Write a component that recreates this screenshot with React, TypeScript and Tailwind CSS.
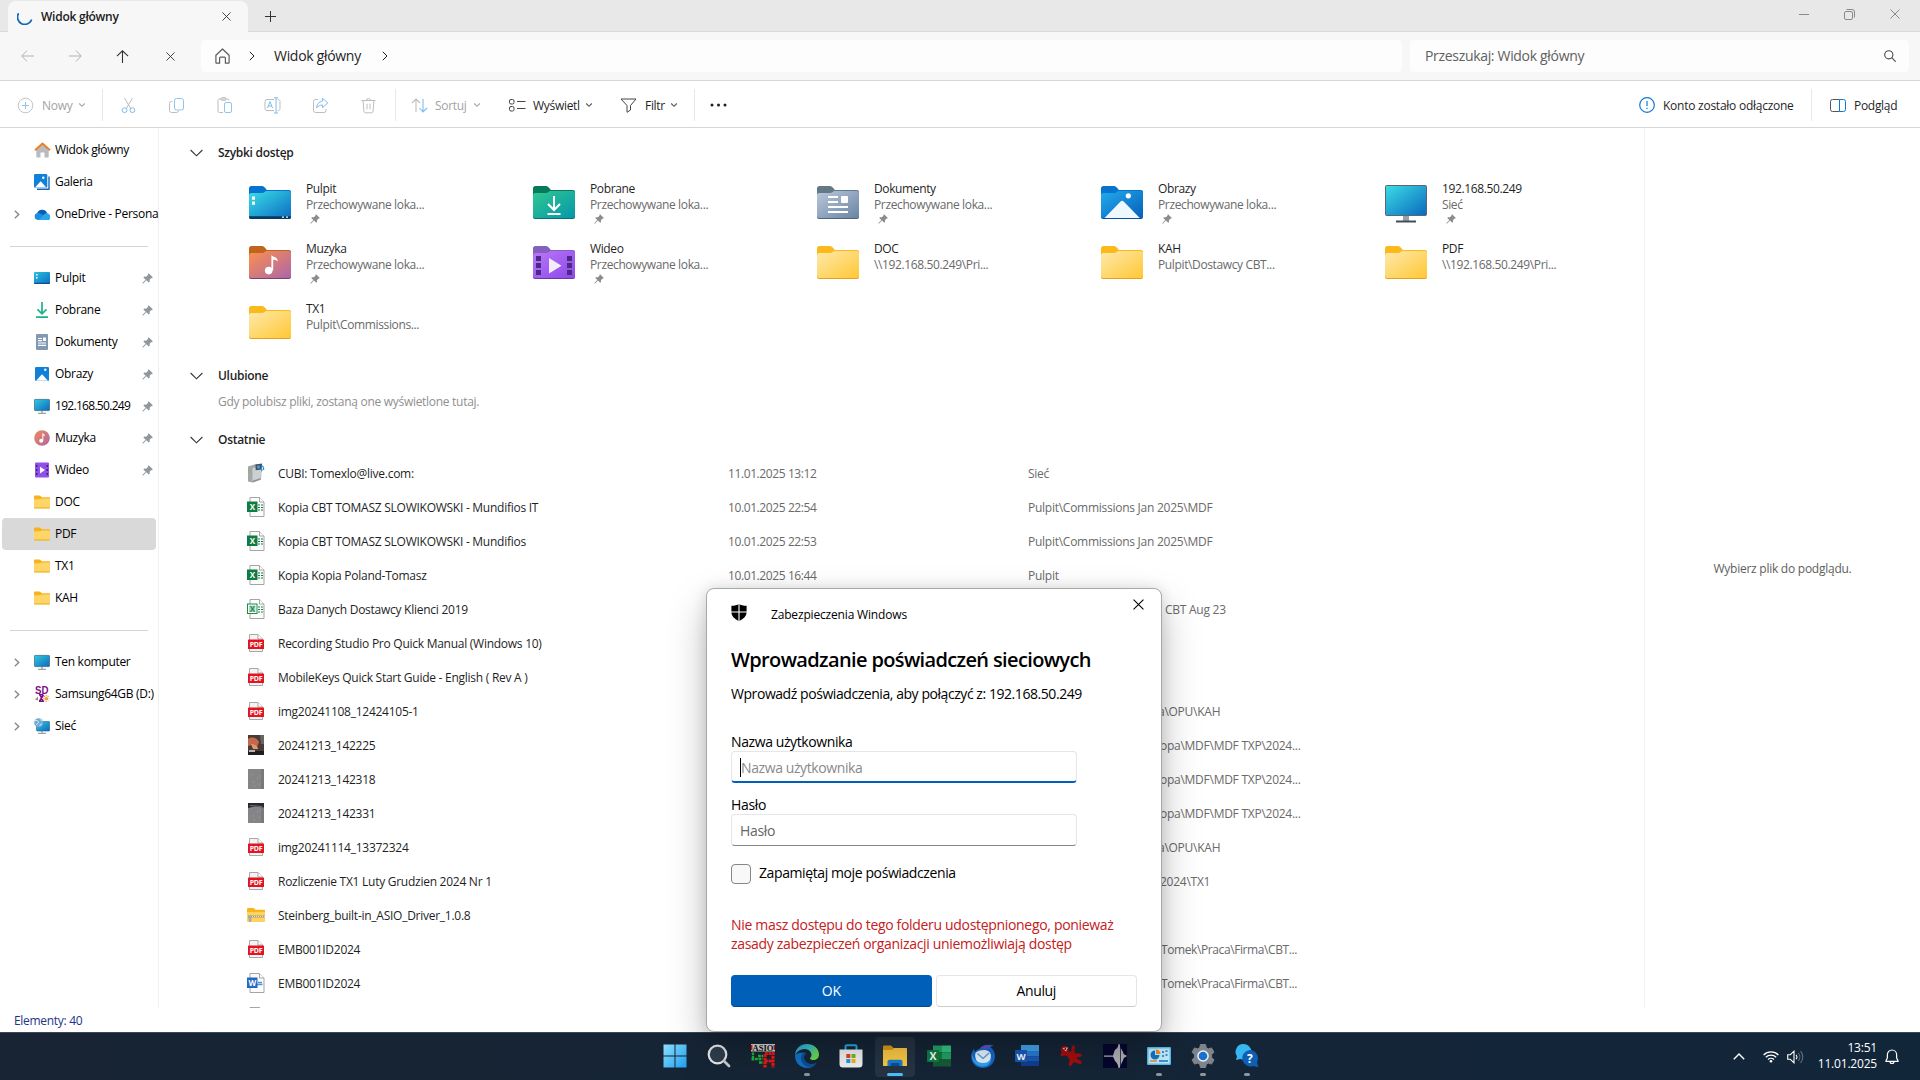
import type { ReactNode } from 'react'

type IconProps = { className?: string }

interface Tile {
  name: string
  sub: string
  pinned?: boolean
  icon: ReactNode
}

interface RecentFile {
  name: string
  date?: string
  location?: string
  indent?: string
  icon: ReactNode
}

/* ---------- line icons ---------- */

function Chevron({ className = '' }: IconProps) {
  return (
    <svg className={`h-[6px] w-[8px] shrink-0 ${className}`} viewBox="0 0 8 6" fill="none" stroke="currentColor" strokeWidth="1.1">
      <path d="M1.2 1.5 4 4.3 6.8 1.5" />
    </svg>
  )
}

function ChevronRight({ className = '' }: IconProps) {
  return (
    <svg className={`h-[10px] w-[6px] shrink-0 ${className}`} viewBox="0 0 6 10" fill="none" stroke="currentColor">
      <path d="M.8.8 5 5 .8 9.2" />
    </svg>
  )
}

function SectionChevron() {
  return (
    <svg className="h-[8px] w-[13px] shrink-0" viewBox="0 0 13 8" fill="none" stroke="#333" strokeWidth="1.1">
      <path d="M.6 1 6.5 6.8 12.4 1" />
    </svg>
  )
}

function Cross({ className = '' }: IconProps) {
  return (
    <svg className={`shrink-0 ${className}`} viewBox="0 0 10 10" fill="none" stroke="currentColor">
      <path d="m.5.5 9 9M9.5.5l-9 9" />
    </svg>
  )
}

function Pin({ className = '' }: IconProps) {
  return (
    <svg className={`shrink-0 ${className}`} viewBox="0 0 11 11" fill="currentColor">
      <path d="M6.7.2 10.8 4.3l-.7.7-.6-.1-1.9 1.9.1 2-.9.8-2.4-2.4L.9 10.7.3 10.1 3.7 6.7 1.4 4.4l.8-.8 2 .1 1.9-1.9-.1-.9z" />
    </svg>
  )
}

/* ---------- coloured icons ---------- */

const FolderBack = ({ color }: { color: string }) => (
  <path d="M0 2.5A2.5 2.5 0 0 1 2.5 0H13c1.500 0 2.500 1 3.500 2.300L17.800 4H40a2 2 0 0 1 2 2v5H0z" fill={color} />
)

function FolderTile({ id, back, from, to, edge, children }: { id: string; back: string; from: string; to: string; edge: string; children?: ReactNode }) {
  return (
    <svg className="h-[33px] w-[42px] shrink-0" viewBox="0 0 42 33">
      <defs>
        <linearGradient id={id} x1="0" y1="0" x2="1" y2="1">
          <stop offset=".1" stopColor={from} />
          <stop offset=".95" stopColor={to} />
        </linearGradient>
      </defs>
      <FolderBack color={back} />
      <path d="M0 9c0-1.200.8-2 2-2h11c1.500 0 2.300-.6 3.200-1.400.5-.5 1-.6 1.800-.6h22a2 2 0 0 1 2 2v24a2 2 0 0 1-2 2H2a2 2 0 0 1-2-2z" fill={edge} />
      <path d="M0 9c0-1.200.8-2 2-2h11c1.500 0 2.300-.6 3.200-1.400.5-.5 1-.6 1.800-.6h22a2 2 0 0 1 2 2v23a2 2 0 0 1-2 2H2a2 2 0 0 1-2-2z" fill={`url(#${id})`} />
      {children}
    </svg>
  )
}

const YellowTile = ({ id }: { id: string }) => (
  <FolderTile id={id} back="#fbb91c" from="#fee6a0" to="#ffc93a" edge="#e3a120" />
)

const DesktopTile = (
  <FolderTile id="t-desk" back="#0673cf" from="#35d3e3" to="#0f72c5" edge="#0a4a80">
    <path d="M3 10.500h3v3.200H3zM3 15.500h3v3.200H3z" fill="#fff" />
    <path d="M0 30.300h42v.7a2 2 0 0 1-2 2H2a2 2 0 0 1-2-2z" fill="#093a64" />
    <path d="M33 30.500h2v1.300h-2zM37 30.500h2v1.300h-2z" fill="#dff" />
  </FolderTile>
)

const DownloadTile = (
  <FolderTile id="t-down" back="#067a5b" from="#2cc394" to="#0899a8" edge="#0b6f74">
    <path d="M21 10v13.500M15 18l6 6 6-6M14.500 28h13" stroke="#fff" strokeWidth="2" fill="none" />
  </FolderTile>
)

const DocsTile = (
  <FolderTile id="t-docs" back="#647987" from="#b3c1d6" to="#6c88a6" edge="#4e657d">
    <path d="M11 11h10M11 16h10M11 21h20M11 26h20" stroke="#fff" strokeWidth="2" />
    <rect x="24" y="10" width="7" height="7" rx="1" fill="#fff" />
  </FolderTile>
)

const PicturesTile = (
  <FolderTile id="t-pics" back="#0673cf" from="#20a3e8" to="#0763bb" edge="#07509c">
    <path d="M3.500 32 19.300 15.700a2.500 2.500 0 0 1 3.600 0L38.800 32z" fill="#eef8ff" />
    <circle cx="27.300" cy="9.800" r="2.600" fill="#fff" />
  </FolderTile>
)

const MusicTile = (
  <FolderTile id="t-music" back="#c0651b" from="#f58c56" to="#b068a4" edge="#7b3f72">
    <path d="M22.400 9c1 2 6.500 1.600 6.300 6.500-1.800-1.700-3.300-1.800-4.500-1.800v10.500h-1.800z" fill="#fff" />
    <circle cx="19.700" cy="24.600" r="3.800" fill="#fff" />
  </FolderTile>
)

const VideoTile = (
  <FolderTile id="t-video" back="#8461bf" from="#b672f7" to="#8e4be8" edge="#6638a8">
    <path d="M3 10h5v5H3zM3 17h5v5H3zM3 24h5v5H3zM34 10h5v5h-5zM34 17h5v5h-5zM34 24h5v5h-5z" fill="#4a2a86" />
    <path d="M16 12v15.500l12.500-7.700z" fill="#f2ecfb" />
  </FolderTile>
)

const MonitorTile = (
  <svg className="-mt-px h-[38px] w-[42px] shrink-0" viewBox="0 0 42 38">
    <defs>
      <linearGradient id="t-mon" x1="0" y1="0" x2="1" y2="1">
        <stop offset="0" stopColor="#3bdde6" />
        <stop offset="1" stopColor="#0a68be" />
      </linearGradient>
    </defs>
    <path d="M18 30h6v6h-6z" fill="#9aa0a6" />
    <path d="M11 35.500h20v2H11z" fill="#454d55" />
    <rect x=".5" y=".5" width="41" height="30" rx="1" fill="url(#t-mon)" stroke="#5b6670" />
  </svg>
)

function SmallFolder() {
  return (
    <svg className="h-[14px] w-[16px]" viewBox="0 0 16 14">
      <path d="M0 1.500C0 .7.700.5 1.300.5h4.200c.6 0 1 .3 1.400.8l.8.9h7.200c.7 0 1.100.4 1.100 1V6H0z" fill="#f4b41a" />
      <path d="M0 5.200c0-.6.300-.9.900-.9h4.700c.7 0 1.100-.2 1.500-.6l.3-.3h7.500c.7 0 1.100.3 1.100.9v8c0 .6-.4 1-1 1H1c-.6 0-1-.4-1-1z" fill="#ffd567" />
      <path d="M0 12.500h16c0 .6-.4 1-1 1H1c-.6 0-1-.4-1-1z" fill="#eba91e" />
    </svg>
  )
}

function SmallHome() {
  return (
    <svg className="h-[16px] w-[17px] shrink-0" viewBox="0 0 17 16">
      <path d="M2.300 7 8.500 2l6.200 5v7.600c0 .6-.4 1-1 1h-3.200v-5h-4v5H3.300c-.6 0-1-.4-1-1z" fill="#b9bcbf" />
      <path d="M1 8.200 8.500 1.500 16 8.200" fill="none" stroke="#ef7f22" strokeWidth="2" strokeLinejoin="round" />
    </svg>
  )
}

function SmallPicture({ stacked = false }: { stacked?: boolean }) {
  return (
    <svg className="size-[16px]" viewBox="0 0 16 16">
      {stacked && <path d="M15 2.500v12.700H3" stroke="#1769b8" strokeWidth="1.400" fill="none" />}
      <rect x={stacked ? 0 : 1} y={stacked ? 0 : 1} width={stacked ? 13.3 : 14} height={stacked ? 13.8 : 14} rx="1.200" fill="#1180d8" />
      <path d={stacked ? 'M1 13.500 6.700 7.200 12.300 13.500z' : 'M2 14.800 8 8.300l6 6.500z'} fill="#fff" />
      <circle cx={stacked ? 9.3 : 11.3} cy="3.800" r="1.200" fill="#fff" />
    </svg>
  )
}

function SmallCloud() {
  return (
    <svg className="h-[11px] w-[17px] shrink-0" viewBox="0 0 17 11">
      <path d="M3 5.500A5.200 5.200 0 0 1 13 4l-2 4z" fill="#0a5fb5" />
      <path d="M3.800 11A3.600 3.600 0 0 1 3.500 3.900c1-.3 2 0 2.800.5L16 9.500c-.5 1-1.200 1.500-2.300 1.500z" fill="#1b8ce0" />
      <path d="M9 7c1-2.500 3.500-3.300 5.500-2.200A3.300 3.300 0 0 1 13.500 11H4z" fill="#28a8ea" />
    </svg>
  )
}

function SmallDesktop() {
  return (
    <svg className="h-[12px] w-[16px]" viewBox="0 0 16 12">
      <rect width="16" height="12" rx="1" fill="url(#s-desk)" />
      <path d="M0 10.800h16v.3c0 .5-.4.9-1 .9H1c-.6 0-1-.4-1-.9z" fill="#0b4f8f" />
      <path d="M2 2h1.600v1.600H2zM2 5h1.600v1.600H2z" fill="#fff" />
      <defs>
        <linearGradient id="s-desk" x1="0" y1="0" x2="1" y2="1">
          <stop stopColor="#27c0de" />
          <stop offset="1" stopColor="#0f6fc4" />
        </linearGradient>
      </defs>
    </svg>
  )
}

function SmallDownload() {
  return (
    <svg className="size-[16px]" viewBox="0 0 16 16" fill="none" stroke="#1fb08a" strokeWidth="1.700">
      <path d="M8 0v11.500M3.500 7.300 8 11.800l4.500-4.500M2 15.100h12" />
    </svg>
  )
}

function SmallDocument() {
  return (
    <svg className="h-[16px] w-[12px]" viewBox="0 0 12 16">
      <rect width="12" height="16" rx="1" fill="#8399b3" />
      <path d="M2 4.500h4M2 6.700h4M2 9h8M2 11.300h8" stroke="#fff" strokeWidth="1.200" />
      <path d="M7 3.500h3v3.500H7z" fill="#fff" />
    </svg>
  )
}

function SmallMonitor({ globe = false }: { globe?: boolean }) {
  return (
    <svg className="size-[16px]" viewBox="0 0 16 16">
      <defs>
        <linearGradient id="s-mon" x1="0" y1="0" x2="1" y2="1">
          <stop stopColor="#2fcbe0" />
          <stop offset="1" stopColor="#0e68bd" />
        </linearGradient>
      </defs>
      <path d="M4 15.300h8M8 12v3" stroke="#9aa3aa" strokeWidth="1.300" />
      {globe ? (
        <>
          <rect x="2.500" y="3.500" width="13.200" height="9.500" rx=".8" fill="url(#s-mon)" stroke="#23648f" strokeWidth=".6" />
          <circle cx="4.700" cy="4.700" r="4.500" fill="#6fa9d6" />
          <path d="M1 3c1.500-1.500 3 0 3.500 1S3 6 2 7M6 1c0 1 1.500 1.500 2.500 2M6 8c-.5-1 .5-2 2-2" stroke="#d8ecf6" fill="none" />
        </>
      ) : (
        <rect x=".4" y="1.400" width="15.200" height="11.200" rx=".8" fill="url(#s-mon)" stroke="#3c6c86" strokeWidth=".8" />
      )}
    </svg>
  )
}

function SmallMusic() {
  return (
    <svg className="size-[16px]" viewBox="0 0 16 16">
      <circle cx="8" cy="8" r="7.800" fill="url(#s-mus)" />
      <path d="M8.300 3c.5 1 2.700.8 2.700 3.200-.8-.7-1.300-.7-1.700-.7v5h-1z" fill="#fff" />
      <circle cx="7.200" cy="10.700" r="2" fill="#fff" />
      <defs>
        <linearGradient id="s-mus" x1="0" y1="0" x2="1" y2="1">
          <stop stopColor="#f08a5f" />
          <stop offset="1" stopColor="#b0669e" />
        </linearGradient>
      </defs>
    </svg>
  )
}

function SmallVideo() {
  return (
    <svg className="size-[16px]" viewBox="0 0 16 16">
      <rect x="1" y=".5" width="14" height="15" rx="1" fill="#9150e8" />
      <path d="M2 3h1.500v2H2zM2 7h1.500v2H2zM2 11h1.500v2H2zM12.500 3H14v2h-1.500zM12.500 7H14v2h-1.500zM12.500 11H14v2h-1.500z" fill="#41247c" />
      <path d="M6 4.800v6.600L11 8z" fill="#fff" />
    </svg>
  )
}

function SmallSd() {
  return (
    <svg className="size-[16px]" viewBox="0 0 16 16">
      <text x="1" y="7.500" fontSize="10" fontWeight="700" fill="#7d0f86" fontFamily="Liberation Sans" textLength="13.500" lengthAdjust="spacingAndGlyphs">SD</text>
      <path d="M5 8.800h4.500M5 15.300h5M6 9l3 6M9.500 9l-4 6" stroke="#7d0f86" strokeWidth="1.500" />
      <path d="M1 13.500 4 10.500v4z" fill="#8c8c80" />
      <path d="M12.200 9v7M9 12.300h6.500M10 10l4.500 4.500M14.500 10 10 14.500" stroke="#f0902e" strokeWidth="1.100" strokeDasharray="1.300 .7" />
    </svg>
  )
}

function PdfIcon() {
  return (
    <svg className="h-[18px] w-[16px]" viewBox="0 0 16 18">
      <path d="M1.500.5H10L14.500 5v12.500h-13z" fill="#f4f4f4" stroke="#a7a7a7" />
      <path d="M10 .5V5h4.500" fill="#fff" stroke="#a7a7a7" />
      <rect y="5.500" width="16" height="9.500" rx=".6" fill="#e3131f" />
      <text x="8" y="12.700" textAnchor="middle" fontSize="6.800" fontWeight="700" fill="#fff" fontFamily="Open Sans" textLength="12.500" lengthAdjust="spacingAndGlyphs">PDF</text>
    </svg>
  )
}

function OfficeFile({ letter, color, outline = false }: { letter?: string; color: string; outline?: boolean }) {
  return (
    <svg className="h-[20px] w-[18px]" viewBox="0 0 18 20">
      <path d="M3 .5h9.500l4.500 4.500v14.500H3z" fill="#fcfcfc" stroke="#9b9b9b" strokeWidth=".9" />
      <path d="M12.500.5V5H17" fill="#fff" stroke="#9b9b9b" strokeWidth=".9" />
      {letter === 'X' && <path d="M11 8h2M14 8h2M11 10.500h2M14 10.500h2M11 13h2M14 13h2" stroke={color} strokeWidth="1.100" />}
      {letter === 'W' && <path d="M11 9.500h4M10 11.500h5.500" stroke="#4a97e0" strokeWidth="1.300" />}
      {letter && (
        <>
          <rect x=".5" y="5" width="9.500" height="9.500" fill={outline ? '#fff' : color} stroke={color} />
          {outline && <path d="M2 6.500h6.500v6.500H2z" fill={color} opacity=".35" />}
          <text x="5.200" y="12.600" textAnchor="middle" fontSize="8" fontWeight="700" fill={outline ? color : '#fff'} fontFamily="Open Sans">{letter}</text>
        </>
      )}
    </svg>
  )
}

function DeviceIcon() {
  return (
    <svg className="h-[20px] w-[18px]" viewBox="0 0 18 20">
      <path d="M1 3.500 9 1l6 1.500-1 14L5.500 19.500 1 18.500z" fill="#a3a7aa" />
      <path d="M5.500 5 14.500 3l-.8 13.500-8.200 3z" fill="#cdd0d2" />
      <path d="M6 17.500 13.700 15v1.500l-8 3z" fill="#8f9396" />
      <path d="M2 5.500v4" stroke="#7fc241" strokeWidth="1" />
      <path d="M8.500 1.500 15 .5l-.3 6-6 .8z" fill="#42515e" />
      <circle cx="11.500" cy="4" r="1.700" fill="#3f97dd" />
      <path d="M14.500 2.500c2 .8 2.500 2.500 2 4.500M14 5c1 .8 1.200 2 .5 3.200" stroke="#2392e6" strokeWidth="1.200" fill="none" />
    </svg>
  )
}

function PhotoThumb({ kind }: { kind: 'hand' | 'plain' | 'dark' }) {
  return (
    <svg className="h-[20px] w-[16px]" viewBox="0 0 16 20">
      <rect width="16" height="20" fill={kind === 'hand' ? '#4a3b36' : '#858586'} />
      {kind === 'hand' && (
        <>
          <path d="M0 4c4-3 9-1 11 3l-2 5-5-2-4 1z" fill="#c4694b" />
          <path d="M3 9c3 0 7 2 7 5H5z" fill="#e09873" />
          <path d="M12 0h4v9h-3z" fill="#6b6461" />
          <path d="M0 16h16v4H0z" fill="#241d1d" />
          <path d="M1 15h6v2H1z" fill="#b9b4b0" />
        </>
      )}
      {kind !== 'hand' && <path d="M3 5h1M9 9h1M11 15h1M5 13h1M12 7h1M6 17h1" stroke="#a5a3a2" />}
      {kind !== 'hand' && <path d="M14.500 0v20" stroke="#6d6e70" strokeWidth="3" opacity=".5" />}
      {kind === 'plain' && <path d="M2.500 8h1.200M9.500 15.500h1.200" stroke="#c07275" />}
      {kind === 'dark' && <path d="M0 0h16v4.500L7 3.500 0 5z" fill="#2a2a2e" />}
      {kind === 'dark' && <path d="M2 2.500 14 3.500" stroke="#66788a" />}
    </svg>
  )
}

function ZipFolder() {
  return (
    <svg className="h-[15px] w-[18px]" viewBox="0 0 18 15">
      <path d="M0 1.500C0 .5.500 0 1.300 0h5c.6 0 1 .3 1.400.8l.8.9H17c.7 0 1 .4 1 1V6H0z" fill="#f7b51e" />
      <path d="M0 4h18v9c0 .6-.4 1-1 1H1c-.6 0-1-.4-1-1z" fill="#ffd35c" />
      <path d="M1 7.500h17v2H1z" fill="#a59a86" />
      <path d="M3 8.500h15" stroke="#e9e1cf" strokeDasharray="1 1" />
      <path d="M1 7.500h4L4 14H2z" fill="#a8abad" />
    </svg>
  )
}

/* ---------- data ---------- */

const tiles: Tile[] = [
  { name: 'Pulpit', sub: 'Przechowywane loka...', pinned: true, icon: DesktopTile },
  { name: 'Pobrane', sub: 'Przechowywane loka...', pinned: true, icon: DownloadTile },
  { name: 'Dokumenty', sub: 'Przechowywane loka...', pinned: true, icon: DocsTile },
  { name: 'Obrazy', sub: 'Przechowywane loka...', pinned: true, icon: PicturesTile },
  { name: '192.168.50.249', sub: 'Sieć', pinned: true, icon: MonitorTile },
  { name: 'Muzyka', sub: 'Przechowywane loka...', pinned: true, icon: MusicTile },
  { name: 'Wideo', sub: 'Przechowywane loka...', pinned: true, icon: VideoTile },
  { name: 'DOC', sub: '\\\\192.168.50.249\\Pri...', icon: <YellowTile id="t-doc" /> },
  { name: 'KAH', sub: 'Pulpit\\Dostawcy CBT...', icon: <YellowTile id="t-kah" /> },
  { name: 'PDF', sub: '\\\\192.168.50.249\\Pri...', icon: <YellowTile id="t-pdf" /> },
  { name: 'TX1', sub: 'Pulpit\\Commissions...', icon: <YellowTile id="t-tx1" /> },
]

const excel = <OfficeFile letter="X" color="#107c41" />

const recent: RecentFile[] = [
  { name: 'CUBI: Tomexlo@live.com:', date: '11.01.2025 13:12', location: 'Sieć', icon: <DeviceIcon /> },
  { name: 'Kopia CBT TOMASZ SLOWIKOWSKI - Mundifios IT', date: '10.01.2025 22:54', location: 'Pulpit\\Commissions Jan 2025\\MDF', icon: excel },
  { name: 'Kopia CBT TOMASZ SLOWIKOWSKI - Mundifios', date: '10.01.2025 22:53', location: 'Pulpit\\Commissions Jan 2025\\MDF', icon: excel },
  { name: 'Kopia Kopia Poland-Tomasz', date: '10.01.2025 16:44', location: 'Pulpit', icon: excel },
  { name: 'Baza Danych Dostawcy Klienci 2019', location: 'CBT Aug 23', indent: 'pl-[137px]', icon: <OfficeFile letter="X" color="#1d8a4e" outline /> },
  { name: 'Recording Studio Pro Quick Manual (Windows 10)', icon: <PdfIcon /> },
  { name: 'MobileKeys Quick Start Guide - English ( Rev A )', icon: <PdfIcon /> },
  { name: 'img20241108_12424105-1', location: 'a\\OPU\\KAH', indent: 'pl-[130px]', icon: <PdfIcon /> },
  { name: '20241213_142225', location: 'opa\\MDF\\MDF TXP\\2024...', indent: 'pl-[132px]', icon: <PhotoThumb kind="hand" /> },
  { name: '20241213_142318', location: 'opa\\MDF\\MDF TXP\\2024...', indent: 'pl-[132px]', icon: <PhotoThumb kind="plain" /> },
  { name: '20241213_142331', location: 'opa\\MDF\\MDF TXP\\2024...', indent: 'pl-[132px]', icon: <PhotoThumb kind="dark" /> },
  { name: 'img20241114_13372324', location: 'a\\OPU\\KAH', indent: 'pl-[130px]', icon: <PdfIcon /> },
  { name: 'Rozliczenie TX1 Luty Grudzien 2024 Nr 1', location: '2024\\TX1', indent: 'pl-[132px]', icon: <PdfIcon /> },
  { name: 'Steinberg_built-in_ASIO_Driver_1.0.8', icon: <ZipFolder /> },
  { name: 'EMB001ID2024', location: 'Tomek\\Praca\\Firma\\CBT...', indent: 'pl-[133px] tracking-[-0.4px]', icon: <PdfIcon /> },
  { name: 'EMB001ID2024', location: 'Tomek\\Praca\\Firma\\CBT...', indent: 'pl-[133px] tracking-[-0.4px]', icon: <OfficeFile letter="W" color="#2368c4" /> },
  { name: '', icon: <OfficeFile color="#2368c4" /> },
]

/* ---------- window parts ---------- */

function TitleBar() {
  return (
    <div className="flex h-8 shrink-0 border-b border-[#d9d9d9] bg-[#e8e8e8] pl-2">
      <div className="mt-px flex h-[31px] w-[240px] shrink-0 items-center rounded-t-lg bg-[#f7f7f7] pr-[17px] pl-[9px]">
        <svg className="size-4 shrink-0" viewBox="0 0 16 16" fill="none" stroke="#1467b8" strokeWidth="1.800" strokeLinecap="round">
          <path d="M1.200 5A7 7 0 0 0 14.300 11.300" />
        </svg>
        <span className="ml-2 flex-1 text-[12px] font-semibold tracking-[-0.25px] text-[#1b1b1b]">Widok główny</span>
        <Cross className="-mt-px size-[9px] text-[#333]" />
      </div>
      <svg className="mt-[11px] ml-[17px] size-[11px]" viewBox="0 0 11 11" stroke="#333">
        <path d="M5.500 0v11M0 5.500h11" />
      </svg>
      <div className="ml-auto flex h-7 items-center pr-[20px] text-[#8a8a8a]">
        <svg className="h-[10px] w-[10px]" viewBox="0 0 10 10" stroke="currentColor">
          <path d="M0 5.500h10" />
        </svg>
        <svg className="ml-[35px] size-[11px]" viewBox="0 0 11 11" fill="none" stroke="currentColor">
          <rect x=".5" y="2.500" width="8" height="8" rx="1.500" />
          <path d="M2.500.5H8A2.500 2.500 0 0 1 10.500 3v5.500" />
        </svg>
        <Cross className="ml-[35px] size-[10px]" />
      </div>
    </div>
  )
}

function NavBar() {
  return (
    <div className="flex h-[49px] shrink-0 items-center border-b border-[#d6d6d6] bg-[#f7f7f7]">
      <svg className="ml-[21px] h-[12px] w-[13px]" viewBox="0 0 13 12" fill="none" stroke="#b3b3b3">
        <path d="M6 .5.8 6 6 11.500M.8 6H13" />
      </svg>
      <svg className="ml-[35px] h-[12px] w-[13px]" viewBox="0 0 13 12" fill="none" stroke="#b3b3b3">
        <path d="m7 .5 5.200 5.500L7 11.500M12.200 6H0" />
      </svg>
      <svg className="ml-[34px] h-[13px] w-[13px]" viewBox="0 0 13 13" fill="none" stroke="#333" strokeWidth="1.100">
        <path d="M.9 6.200 6.500.8l5.600 5.400M6.500.8V13" />
      </svg>
      <Cross className="ml-[37px] size-[9px] text-[#333]" />
      <div className="ml-[26px] flex h-8 w-[1201px] items-center rounded bg-[#fdfdfd] text-[#1f1f1f]">
        <svg className="ml-[14px] h-[16px] w-[15px]" viewBox="0 0 15 16" fill="none" stroke="#5c5c5c" strokeWidth="1.200" strokeLinejoin="round">
          <path d="M.9 7.200 7.500 1l6.600 6.200v7.300c0 .4-.3.700-.7.700h-3V10c0-.6-.3-.9-.9-.9h-4c-.6 0-.9.3-.9.900v5.200h-3a.7.700 0 0 1-.7-.7z" />
        </svg>
        <ChevronRight className="ml-[19px]" />
        <span className="ml-[19px] w-[90px] pb-[2px] text-[14px] tracking-[-0.3px] whitespace-nowrap">Widok główny</span>
        <ChevronRight className="ml-[18px]" />
      </div>
      <div className="ml-2 flex h-8 w-[499px] items-center rounded bg-[#fdfdfd] pr-[13px] pl-[15px]">
        <span className="flex-1 pb-[2px] text-[14px] tracking-[-0.32px] text-[#606060]">Przeszukaj: Widok główny</span>
        <svg className="size-[12px]" viewBox="0 0 12 12" fill="none" stroke="#4a4a4a" strokeWidth="1.100">
          <circle cx="4.800" cy="4.800" r="4.100" />
          <path d="m7.700 7.700 4 4" />
        </svg>
      </div>
    </div>
  )
}

function ToolDivider() {
  return <div className="h-8 w-px shrink-0 bg-[#e8e8e8]" />
}

function Toolbar() {
  const tool = 'size-[17px] shrink-0'
  const label = 'pt-[2px]'
  return (
    <div className="flex h-[47px] shrink-0 items-center border-b border-[#d6d6d6] bg-white pt-[2px] text-[12px] tracking-[-0.3px] text-[#1f1f1f]">
      <div className="flex w-[102px] items-center pl-[17px] text-[#a3a3a3]">
        <svg className="size-[17px]" viewBox="0 0 17 17" fill="none" stroke="#c4c4c4">
          <circle cx="8.500" cy="8.500" r="7.300" />
          <path d="M8.500 5v7M5 8.500h7" stroke="#8cc5ee" />
        </svg>
        <span className={`ml-2 w-[32px] ${label}`}>Nowy</span>
        <Chevron className="ml-[4px]" />
      </div>
      <ToolDivider />
      <div className="flex w-[292px] items-center gap-[31px] pl-[17px]">
        <svg className={tool} viewBox="0 0 17 17" fill="none" stroke="#bdbdbd">
          <path d="M4.500 1 11 12M12.500 1 6 12" />
          <circle cx="4.600" cy="13.200" r="2.400" stroke="#7fbdea" />
          <circle cx="12.400" cy="13.200" r="2.400" stroke="#7fbdea" />
        </svg>
        <svg className={tool} viewBox="0 0 17 17" fill="none" stroke="#bdbdbd">
          <path d="M4.500 4.500h-1a2 2 0 0 0-2 2v7a2 2 0 0 0 2 2h5a2 2 0 0 0 2-1.500" />
          <rect x="6.500" y="1.500" width="9" height="11.500" rx="2" stroke="#8cc5ee" />
        </svg>
        <svg className={tool} viewBox="0 0 17 17" fill="none" stroke="#bdbdbd">
          <path d="M7 15.500H3.500a1.500 1.500 0 0 1-1.500-1.500V3.500A1.500 1.500 0 0 1 3.500 2h8A1.500 1.500 0 0 1 13 3.500" />
          <rect x="5" y=".7" width="5" height="2.600" rx="1" />
          <rect x="8.500" y="5.500" width="7" height="10" rx="1.500" stroke="#8cc5ee" />
        </svg>
        <svg className={tool} viewBox="0 0 17 17" fill="none" stroke="#bdbdbd">
          <path d="M10 2.500H3a2 2 0 0 0-2 2v7a2 2 0 0 0 2 2h7M13.500 2.500a2 2 0 0 1 2.500 2v7a2 2 0 0 1-2.500 2" />
          <path d="M3.500 11 6 4.500 8.500 11M4.400 9h3.200M10 .8h4M10 16h4M12 .8V16" stroke="#7fbdea" />
        </svg>
        <svg className={tool} viewBox="0 0 17 17" fill="none" stroke="#bdbdbd">
          <path d="M6 2.500H3.500a2 2 0 0 0-2 2v9a2 2 0 0 0 2 2h8.500a2 2 0 0 0 2-2V12" />
          <path d="M10.500 1.200 15.800 6l-5.300 4.500V8C8 8 6 9 4.500 11c.3-3.700 2.500-6.500 6-7z" stroke="#7fbdea" strokeLinejoin="round" />
        </svg>
        <svg className={tool} viewBox="0 0 17 17" fill="none" stroke="#bdbdbd">
          <path d="M1.500 3.500h14M3 3.500l1 11a1.500 1.500 0 0 0 1.500 1.300h6A1.500 1.500 0 0 0 13 14.500l1-11M6.500 3.500a2 2 0 0 1 4 0M7 6.800v5.500M10 6.800v5.500" />
        </svg>
      </div>
      <ToolDivider />
      <div className="flex w-[108px] items-center pl-[15px] text-[#a3a3a3]">
        <svg className="h-[15px] w-[17px]" viewBox="0 0 17 15" fill="none" stroke="#bdbdbd" strokeWidth="1.100">
          <path d="M5 14V1M1 5l4-4 4 4" />
          <path d="M12 1v13M8.500 10l3.500 4 4-4" stroke="#7fbdea" />
        </svg>
        <span className={`ml-[7px] w-[34px] ${label}`}>Sortuj</span>
        <Chevron className="ml-[4px]" />
      </div>
      <div className="flex w-[112px] items-center pl-[5px]">
        <svg className="h-[13px] w-[17px]" viewBox="0 0 17 13" fill="none" stroke="#444">
          <rect x=".5" y=".5" width="4.500" height="4.500" rx="1.500" />
          <rect x=".5" y="7.500" width="4.500" height="4.500" rx="1.500" />
          <path d="M8 2.500h8.500M8 9.500h8.500" />
        </svg>
        <span className={`ml-[7px] w-[48px] ${label}`}>Wyświetl</span>
        <Chevron className="ml-[4px] text-[#555]" />
      </div>
      <div className="flex w-[78px] items-center pl-[4px]">
        <svg className="h-[15px] w-[17px]" viewBox="0 0 17 15" fill="none" stroke="#444" strokeLinejoin="round">
          <path d="M1 1h15l-5.500 6.500v4.500L7 14.300V7.500z" />
        </svg>
        <span className={`ml-[8px] w-[24px] ${label}`}>Filtr</span>
        <Chevron className="ml-px text-[#555]" />
      </div>
      <ToolDivider />
      <svg className="ml-[15px] h-[4px] w-[17px]" viewBox="0 0 17 4" fill="#1f1f1f">
        <circle cx="2" cy="2" r="1.500" />
        <circle cx="8.500" cy="2" r="1.500" />
        <circle cx="15" cy="2" r="1.500" />
      </svg>
      <div className="ml-auto flex items-center">
        <svg className="size-[16px]" viewBox="0 0 16 16" fill="none" stroke="#0f78d4" strokeWidth="1.200">
          <circle cx="8" cy="8" r="7.300" />
          <path d="M8 4v5M8 10.800v1.300" />
        </svg>
        <span className={`ml-2 w-[148px] tracking-[-0.25px] ${label}`}>Konto zostało odłączone</span>
        <ToolDivider />
        <svg className="ml-[18px] h-[13px] w-[16px]" viewBox="0 0 16 13" fill="none">
          <path d="M9.500.5h-7a2 2 0 0 0-2 2v8a2 2 0 0 0 2 2h7" stroke="#555" />
          <path d="M9.500.5h4a2 2 0 0 1 2 2v8a2 2 0 0 1-2 2h-4z" stroke="#0f78d4" />
        </svg>
        <span className={`ml-2 w-[66px] ${label}`}>Podgląd</span>
      </div>
    </div>
  )
}

interface SideProps {
  label: string
  icon: ReactNode
  pinned?: boolean
  expandable?: boolean
  selected?: boolean
  tight?: boolean
}

function SideItem({ label, icon, pinned, expandable, selected, tight }: SideProps) {
  return (
    <div className={`mx-[2px] flex h-8 w-[154px] items-center rounded-sm ${selected ? 'bg-[#d9d9d9]' : ''}`}>
      <div className="flex w-[32px] shrink-0 justify-start pl-[12px]">
        {expandable && (
          <svg className="h-[9px] w-[6px]" viewBox="0 0 6 9" fill="none" stroke="#8a8a8a" strokeWidth="1.500">
            <path d="M.8.8 4.700 4.500.8 8.200" />
          </svg>
        )}
      </div>
      <div className="flex w-[16px] shrink-0 justify-center">{icon}</div>
      <span className={`ml-[5px] flex-1 text-[12px] whitespace-nowrap text-black ${tight ? 'tracking-[-0.7px]' : 'tracking-[-0.3px]'}`}>{label}</span>
      {pinned && <Pin className="mr-[3px] size-[11px] text-[#8f979e]" />}
    </div>
  )
}

function SideDivider() {
  return <div className="mx-[10px] mt-[16px] mb-[15px] h-px w-[138px] bg-[#d4d4d4]" />
}

function Sidebar() {
  return (
    <div className="w-[159px] shrink-0 border-r border-[#f0f0f0] pt-[6px]">
      <SideItem label="Widok główny" icon={<SmallHome />} />
      <SideItem label="Galeria" icon={<SmallPicture stacked />} />
      <SideItem label="OneDrive - Persona" icon={<SmallCloud />} expandable />
      <SideDivider />
      <SideItem label="Pulpit" icon={<SmallDesktop />} pinned />
      <SideItem label="Pobrane" icon={<SmallDownload />} pinned />
      <SideItem label="Dokumenty" icon={<SmallDocument />} pinned />
      <SideItem label="Obrazy" icon={<SmallPicture />} pinned />
      <SideItem label="192.168.50.249" icon={<SmallMonitor />} pinned tight />
      <SideItem label="Muzyka" icon={<SmallMusic />} pinned />
      <SideItem label="Wideo" icon={<SmallVideo />} pinned />
      <SideItem label="DOC" icon={<SmallFolder />} />
      <SideItem label="PDF" icon={<SmallFolder />} selected />
      <SideItem label="TX1" icon={<SmallFolder />} />
      <SideItem label="KAH" icon={<SmallFolder />} />
      <SideDivider />
      <SideItem label="Ten komputer" icon={<SmallMonitor />} expandable />
      <SideItem label="Samsung64GB (D:)" icon={<SmallSd />} expandable />
      <SideItem label="Sieć" icon={<SmallMonitor globe />} expandable />
    </div>
  )
}

function SectionHead({ label }: { label: string }) {
  return (
    <div className="flex h-6 items-center gap-[15px] pl-[31px]">
      <SectionChevron />
      <span className="text-[12px] font-semibold tracking-[-0.3px] text-[#1f1f1f]">{label}</span>
    </div>
  )
}

function MainPane() {
  return (
    <div className="w-[1485px] shrink-0 pt-[13px] text-[12px]">
      <SectionHead label="Szybki dostęp" />
      <div className="mt-[16px] ml-[90px] grid grid-cols-[repeat(5,284px)]">
        {tiles.map((tile) => (
          <div key={tile.name} className="flex h-[60px]">
            <div className="pt-[5px]">{tile.icon}</div>
            <div className="ml-[15px] tracking-[-0.37px]">
              <div className="h-4 leading-4 text-[#1f1f1f]">{tile.name}</div>
              <div className="h-4 leading-4 text-[#6a6a6a]">{tile.sub}</div>
              {tile.pinned && <Pin className="mt-px ml-[4px] size-[10px] text-[#8c8c8c]" />}
            </div>
          </div>
        ))}
      </div>
      <div className="mt-[3px]">
        <SectionHead label="Ulubione" />
      </div>
      <div className="mt-[6px] ml-[59px] h-4 leading-4 tracking-[-0.29px] text-[#8f8f8f]">Gdy polubisz pliki, zostaną one wyświetlone tutaj.</div>
      <div className="mt-[18px]">
        <SectionHead label="Ostatnie" />
      </div>
      <div className="mt-[5px] tracking-[-0.26px]">
        {recent.map((file, i) => (
          <div key={i} className="flex h-[34px] items-center pl-[87px]">
            <div className="flex w-[20px] justify-center pb-[2px]">{file.icon}</div>
            <span className="ml-[12px] w-[450px] whitespace-nowrap text-[#1f1f1f]">{file.name}</span>
            <span className="w-[300px] tracking-[-0.4px] text-[#6a6a6a]">{file.date}</span>
            <span className={`whitespace-nowrap text-[#6a6a6a] ${file.indent ?? ''}`}>{file.location}</span>
          </div>
        ))}
      </div>
    </div>
  )
}

function CredentialsDialog() {
  return (
    <div className="absolute top-[588px] left-[706px] h-[444px] w-[456px] rounded-lg border border-[#a8a8a8] bg-white px-[24px] text-[14px] text-black shadow-[0_18px_38px_rgba(0,0,0,0.26),0_0_14px_rgba(0,0,0,0.12)]">
      <div className="flex h-[46px] items-start">
        <svg className="mt-[15px] h-[17px] w-[16px]" viewBox="0 0 16 17">
          <path d="M8 0c1.500 1.200 4.500 1.800 7.600 1.800V8c0 4-2.800 6.800-7.600 9C3.200 14.800.4 12 .4 8V1.800C3.500 1.800 6.500 1.200 8 0z" fill="#000" />
          <path d="M8 0v17M0 8h16" stroke="#fff" strokeWidth="1.100" />
        </svg>
        <span className="mt-[18px] ml-[24px] flex-1 text-[12px] leading-4 tracking-[-0.17px]">Zabezpieczenia Windows</span>
        <Cross className="mt-[10px] -mr-[7px] size-[11px]" />
      </div>
      <h1 className="mt-[11px] h-[28px] text-[20px] leading-[28px] font-semibold tracking-[-0.64px] whitespace-nowrap">Wprowadzanie poświadczeń sieciowych</h1>
      <p className="mt-[10px] h-5 leading-5 tracking-[-0.44px] whitespace-nowrap">Wprowadź poświadczenia, aby połączyć z: 192.168.50.249</p>
      <div className="mt-[28px] h-5 leading-5 tracking-[-0.4px]">Nazwa użytkownika</div>
      <div className="-mt-px flex h-[32px] w-[346px] items-center rounded border border-b-2 border-[#e6e6e6] border-b-[#005fb8] pt-px pl-[8px]">
        <div className="h-[19px] w-px bg-black" />
        <span className="pt-px tracking-[-0.4px] text-[#8a8a8a]">Nazwa użytkownika</span>
      </div>
      <div className="mt-[12px] h-5 leading-5 tracking-[-0.35px]">Hasło</div>
      <div className="-mt-px flex h-[32px] w-[346px] items-center rounded border border-[#e6e6e6] border-b-[#868686] pl-[8px] tracking-[-0.35px] text-[#666]">Hasło</div>
      <div className="mt-[18px] flex h-5 items-center">
        <div className="size-5 rounded border border-[#868686] bg-[#f8f8f8]" />
        <span className="ml-2 pb-[3px] tracking-[-0.4px]">Zapamiętaj moje poświadczenia</span>
      </div>
      <p className="mt-[31px] h-[38px] leading-[19px] tracking-[-0.32px] whitespace-nowrap text-[#c42020]">
        Nie masz dostępu do tego folderu udostępnionego, ponieważ
        <br />
        zasady zabezpieczeń organizacji uniemożliwiają dostęp
      </p>
      <div className="mt-[22px] flex gap-1 tracking-[-0.35px]">
        <button className="h-8 w-[201px] rounded border border-[#005fb8] border-b-[#004a90] bg-[#005fb8] pb-[2px] text-white">OK</button>
        <button className="h-8 w-[202px] rounded border border-[#e5e5e5] border-b-[#cccccc] bg-white pb-[2px]">Anuluj</button>
      </div>
    </div>
  )
}

/* ---------- taskbar ---------- */

const taskIcons: { key: string; state?: 'running' | 'active'; svg: ReactNode }[] = [
  {
    key: 'start',
    svg: (
      <>
        <defs>
          <linearGradient id="k-win" x1="0" y1="0" x2="24" y2="24" gradientUnits="userSpaceOnUse">
            <stop stopColor="#8fe2fc" />
            <stop offset="1" stopColor="#1c9df0" />
          </linearGradient>
        </defs>
        <path d="M.5.500h11v11H.5zM12.500.500h11v11h-11zM.5 12.500h11v11H.5zM12.500 12.500h11v11h-11z" fill="url(#k-win)" />
      </>
    ),
  },
  {
    key: 'search',
    svg: (
      <>
        <circle cx="10.500" cy="10.500" r="8.800" fill="#2f3d4c" stroke="#e6e8ea" strokeWidth="2.200" />
        <path d="m17 17 5 5" stroke="#c9ccd0" strokeWidth="2.800" strokeLinecap="round" />
      </>
    ),
  },
  {
    key: 'asio',
    svg: (
      <>
        <rect x="0" y="0" width="24" height="7.500" fill="#d6d6d6" />
        <text x="12" y="7" textAnchor="middle" fontSize="9" fontWeight="700" fill="#111" fontFamily="Liberation Serif" textLength="21" lengthAdjust="spacingAndGlyphs">ASIO</text>
        <path d="M.7 1v5M23.300 1v5" stroke="#d11" strokeWidth="1.400" />
        <path d="M2 8.500v8M.5 15h11M7 12h5M8 18.500h4" stroke="#22b535" strokeWidth="2.400" fill="none" strokeDasharray="2.800 .7" />
        <path d="M14 23.500V9.500h8v14M14 17h8" stroke="#f01818" strokeWidth="3.200" fill="none" strokeDasharray="2.800 .7" />
      </>
    ),
  },
  {
    key: 'edge',
    state: 'running',
    svg: (
      <>
        <defs>
          <linearGradient id="k-e1" x1="0" y1="0" x2="1" y2=".4">
            <stop stopColor="#2aa5e0" />
            <stop offset=".6" stopColor="#3ac4c8" />
            <stop offset="1" stopColor="#6bdc4d" />
          </linearGradient>
        </defs>
        <path d="M12 0C5.500 0 .5 4.500 0 11c2-4 5.500-6 9.500-6 4.500 0 7 3 7 6 0 1.500-1 2.500-1.500 3.200 0 1 1.500 1.800 3.500 1.800 3.500 0 5.500-2.500 5.500-5.500C24 4.500 18.500 0 12 0z" fill="url(#k-e1)" />
        <path d="M0 11c-.5 7.500 5 13 12 13 4 0 7.500-2 9.500-5-6 3-12.500 0-12.500-5.500 0-2 1-3.500 2.500-4.500C7 7.500 2 9 0 11z" fill="#1273c8" />
        <path d="M8 9.500c-3.500 3-2.500 10 3.500 13 4 1.500 8-.5 10-3.500-5 2.500-12 .5-12.500-5.500 0-1.700.8-3.300 2.500-4.500-1-.3-2.500-.2-3.500.5z" fill="#0b4f96" />
      </>
    ),
  },
  {
    key: 'store',
    svg: (
      <>
        <path d="M6.500 6V2.500c0-.8.5-1.300 1.300-1.300h8.400c.8 0 1.300.5 1.300 1.300V6" fill="none" stroke="#25a9ec" strokeWidth="2" />
        <path d="M.5 5.500h23V20a3.500 3.500 0 0 1-3.500 3.500H4A3.500 3.500 0 0 1 .5 20z" fill="#f1f3f5" />
        <path d="M7.300 10h4v4h-4z" fill="#e8441f" />
        <path d="M12.500 10h4v4h-4z" fill="#7fb918" />
        <path d="M7.300 15h4v4h-4z" fill="#1f9fe8" />
        <path d="M12.500 15h4v4h-4z" fill="#fab60e" />
      </>
    ),
  },
  {
    key: 'explorer',
    state: 'active',
    svg: (
      <>
        <path d="M0 3c0-1 .6-1.500 1.500-1.500H8L11 4.500h12c.6 0 1 .4 1 1V9H0z" fill="#e09a17" />
        <path d="M0 6h9l2-2h12c.6 0 1 .4 1 1v17H1c-.6 0-1-.4-1-1z" fill="#fccb45" />
        <path d="M4.500 22v-4c0-1.500.8-2.300 2.200-2.300h10.600c1.400 0 2.200.8 2.200 2.300v4z" fill="#1c7ed0" />
        <path d="M7.500 22v-2c0-.6.4-1 1-1h7c.6 0 1 .4 1 1v2z" fill="#0a5299" />
      </>
    ),
  },
  {
    key: 'excel',
    svg: (
      <>
        <path d="M6 1.500h9v7H6z" fill="#21a366" />
        <path d="M15 1.500h9v7h-9z" fill="#33c481" />
        <path d="M6 8.500h9v7H6z" fill="#107c41" />
        <path d="M15 8.500h9v7h-9z" fill="#21a366" />
        <path d="M6 15.500h18v7H6z" fill="#185c37" />
        <rect x="0" y="6" width="12" height="12" rx="1" fill="#107c41" />
        <text x="6" y="16" textAnchor="middle" fontSize="10.500" fontWeight="700" fill="#fff" fontFamily="Open Sans">X</text>
      </>
    ),
  },
  {
    key: 'thunderbird',
    svg: (
      <>
        <path d="M9 4.500C11 1 16 0 22.500 1.500c-1.500.5-2.500 1-3 1.800 3.500 2.400 5 6.500 4.300 10.700C23 20 18 24 12 24 5 24 0 19 .3 12.500.4 9 1.800 6 3.200 4.500c0 1.300.2 2.300.8 3.200C5.500 6 7 5 9 4.500z" fill="#1668cc" />
        <path d="M9 4.500C12 1 17 .3 22.500 1.500c-3 .5-4.500 1.500-5.500 3z" fill="#6a4fc0" />
        <path d="M4.500 9C7 6 15 4.500 18.500 8c2.500 3 1.500 8-1.500 10.500-4 2.500-9 1.500-11.500-2C4 14 3.800 11 4.500 9z" fill="#eaf5ff" />
        <path d="M6.500 9.500 12 14.500l6-5.500" fill="none" stroke="#5da7ea" strokeWidth="1.600" />
        <path d="M.8 9c1 6 5 10 11.200 10 4 0 7-2 8.500-5-.5 5-4 8.500-9 8.500C5 22.500 0 17 .8 9z" fill="#2fa5f5" />
      </>
    ),
  },
  {
    key: 'word',
    svg: (
      <>
        <path d="M6 1h18v6H6z" fill="#41a5ee" />
        <path d="M6 7h18v5.500H6z" fill="#2b7cd3" />
        <path d="M6 12.500h18V17H6z" fill="#185abd" />
        <path d="M6 17h18v5H6z" fill="#103f91" />
        <rect x="0" y="6" width="12" height="12" rx="1" fill="#185abd" />
        <text x="6" y="15.800" textAnchor="middle" fontSize="9.500" fontWeight="700" fill="#fff" fontFamily="Open Sans">W</text>
      </>
    ),
  },
  {
    key: 'irfan',
    svg: (
      <>
        <path d="M2 6.500C1 4.500 3 2 5.500 2c2.700-.2 4.200 2 3.700 4.500L12 8.300c.6-2.500.2-5.300 1.800-6.700 1.500-1 2.500.7 2 2.200-.5 2-.5 3.700.2 5.200 2 .8 3.700.2 5.500.5 1.800.5 1.800 2.700.2 3.200-1.500.4-3.200 0-4.200.7.8 2 3.700 2.500 5 4.200.8 1.500-.8 2.800-2.300 2.300-2-.6-3.700-2-5.500-1.700-1 1-1.300 2.700-2.700 3.600-1.500.6-2.700-.7-2-2.200.4-1.400 1-2.700.4-4C9.500 13.500 8.500 12.500 7.500 11.500c-2 .2-3.500.8-5.200.4-1.500-.7-1-2.600.5-2.800z" fill="#a80d0d" />
        <path d="M3.500 4 9 3.500 7 7.500z" fill="#e7dcd8" />
        <circle cx="6.300" cy="5" r="1" fill="#511" />
      </>
    ),
  },
  {
    key: 'wave',
    svg: (
      <>
        <rect width="24" height="24" fill="#05062e" />
        <path d="M1 11.600h9l.8-2.600 1-3 1.700-1.200L14.800 3l.7-3h1l.8 3 1 2 1.500 2.500 1 2.700 2.700 1.400v.8L20.800 14l-1 2.700-1.500 3-1 2.500-.8 1.800h-1l-.7-3-1.300-2.500-1.500-1.500-1.200-2.800-.8-1.400H1z" fill="#b0b2b5" />
        <path d="M17.500 0v24" stroke="#05062e" strokeWidth=".7" />
      </>
    ),
  },
  {
    key: 'panel',
    state: 'running',
    svg: (
      <>
        <rect y="3" width="24" height="18" rx="1" fill="#55bdf0" />
        <rect x="1.500" y="4.500" width="21" height="15" fill="#c4ebfb" />
        <path d="M8 6.500A4.500 4.500 0 1 0 12.500 11H8z" fill="#1475c4" />
        <path d="M9 5.500v4.500h4.500A4.500 4.500 0 0 0 9 5.500z" fill="#f08c2a" />
        <path d="M15 8h2M18.500 7h2M15 12h2M18.500 11h2" stroke="#1475c4" strokeWidth="1.300" />
        <path d="M3 17h7" stroke="#f08c2a" strokeWidth="1.500" />
        <path d="M12 17h9" stroke="#1475c4" strokeWidth="1.500" />
      </>
    ),
  },
  {
    key: 'settings',
    state: 'running',
    svg: (
      <>
        <path d="M9.500.5h5l.8 3.300 2 1.100 3.200-1 2.500 4.300-2.400 2.300v3l2.400 2.300-2.500 4.300-3.200-1-2 1.100-.8 3.300h-5l-.8-3.300-2-1.100-3.200 1L1 15.800l2.400-2.300v-3L1 8.200l2.500-4.300 3.200 1 2-1.100z" fill="#7e848b" stroke="#7e848b" strokeLinejoin="round" />
        <circle cx="12" cy="12" r="5.800" fill="#eef1f4" />
        <circle cx="12" cy="12" r="4.300" fill="#1672cc" />
      </>
    ),
  },
  {
    key: 'help',
    state: 'running',
    svg: (
      <>
        <path d="M8.500 0a7.800 7.800 0 0 1 0 15.700c-1.300 0-2-.2-3-.7L1 16l1-3.700A7.800 7.800 0 0 1 8.500 0z" fill="#38b6f1" />
        <path d="M14.500 6a8.300 8.300 0 0 1 7.500 12.200l1.500 5-5-1.200A8.300 8.300 0 1 1 14.500 6z" fill="#0e5fb4" />
        <text x="14.800" y="19" textAnchor="middle" fontSize="12" fontWeight="700" fill="#fff" fontFamily="Open Sans">?</text>
      </>
    ),
  },
]

function Taskbar() {
  return (
    <div className="flex h-12 shrink-0 items-center border-t border-[#3d4855] bg-gradient-to-r from-[#182433] to-[#12263a] pl-[653px] text-white">
      <div className="flex">
        {taskIcons.map((item) => (
          <div key={item.key} className="flex w-11 justify-center">
            <div className={`flex h-10 w-10 flex-col items-center rounded pt-[7px] ${item.state === 'active' ? 'bg-[#263444]' : ''}`}>
              <svg className="size-6" viewBox="0 0 24 24">
                {item.svg}
              </svg>
              {item.state === 'running' && <div className="mt-[5px] h-[3px] w-[6px] rounded-full bg-[#8f969e]" />}
              {item.state === 'active' && <div className="mt-[5px] h-[3px] w-[16px] rounded-full bg-[#4cc2ff]" />}
            </div>
          </div>
        ))}
      </div>
      <div className="ml-auto flex items-center pr-[21px]">
        <svg className="h-[7px] w-[12px]" viewBox="0 0 12 7" fill="none" stroke="#fff" strokeWidth="1.400">
          <path d="M.8 6.200 6 1l5.200 5.200" />
        </svg>
        <svg className="ml-[18px] h-[13px] w-[16px]" viewBox="0 0 16 13" fill="none" stroke="#fff" strokeWidth="1.200">
          <path d="M.6 5A10.500 10.500 0 0 1 15.400 5M2.800 7.300a7.400 7.400 0 0 1 10.400 0M5 9.500a4.300 4.300 0 0 1 6 0" />
          <circle cx="8" cy="11.300" r="1.300" fill="#fff" stroke="none" />
        </svg>
        <svg className="ml-[8px] h-[14px] w-[17px]" viewBox="0 0 17 14" fill="none" stroke="#fff" strokeWidth="1.100">
          <path d="M.7 4.700h2.600L7 1.200v11.600L3.300 9.300H.7zM9 4.800a3 3 0 0 1 0 4.400" />
          <path d="M11.300 3a6 6 0 0 1 0 8M13.600 1.200a9 9 0 0 1 0 11.600" stroke="#67717c" />
        </svg>
        <div className="ml-[9px] w-[64px] pb-px text-right text-[12px] leading-4 tracking-[-0.2px]">
          <div>13:51</div>
          <div>11.01.2025</div>
        </div>
        <svg className="ml-[8px] h-[16px] w-[14px]" viewBox="0 0 14 16" fill="none" stroke="#fff" strokeWidth="1.200" strokeLinejoin="round">
          <path d="M7 1a4.600 4.600 0 0 0-4.600 4.600v3.200L.8 12.300h12.400l-1.600-3.500V5.600A4.600 4.600 0 0 0 7 1zM5 12.500a2 2 0 0 0 4 0" />
        </svg>
      </div>
    </div>
  )
}

export default function App() {
  return (
    <div className="relative flex h-[1080px] w-[1920px] flex-col overflow-hidden bg-white font-['Open_Sans','Noto_Sans',sans-serif]">
      <TitleBar />
      <NavBar />
      <Toolbar />
      <div className="flex h-[880px] shrink-0 overflow-hidden">
        <Sidebar />
        <MainPane />
        <div className="flex flex-1 items-center justify-center border-l border-[#f3f3f3] pt-[2px] text-[12px] tracking-[-0.25px] text-[#605e5c]">
          Wybierz plik do podglądu.
        </div>
      </div>
      <div className="flex h-6 shrink-0 items-center pt-[2px] pl-[14px] text-[12px] tracking-[-0.3px] text-[#1e3287]">Elementy: 40</div>
      <Taskbar />
      <CredentialsDialog />
    </div>
  )
}
